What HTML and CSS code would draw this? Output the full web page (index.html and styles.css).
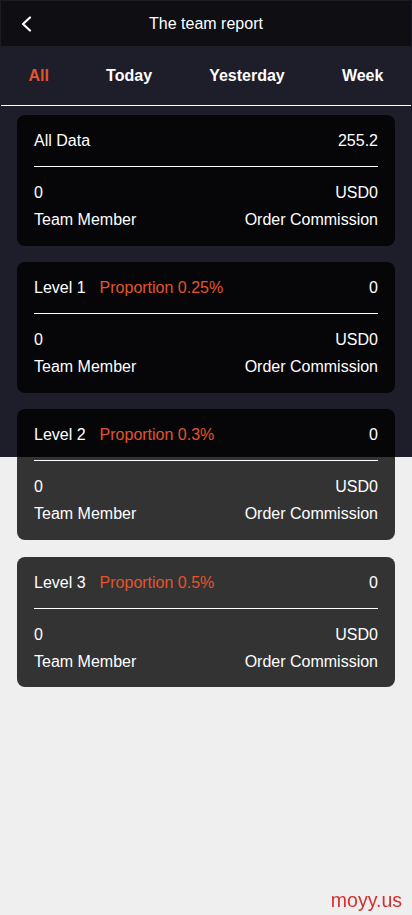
FILE: index.html
```html
<!DOCTYPE html>
<html lang="en">
<head>
<meta charset="utf-8">
<meta name="viewport" content="width=device-width, initial-scale=1">
<title>The team report</title>
<link rel="stylesheet" href="styles.css">
</head>
<body>
<div class="page">
  <header class="topbar">
    <span class="back">
      <svg width="16" height="16" viewBox="0 0 16 16"><path d="M12 1.5 L5 8 L12 14.5" fill="none" stroke="#fff" stroke-width="2.2" stroke-linecap="round" stroke-linejoin="round"/></svg>
    </span>
    <h1 class="title">The team report</h1>
  </header>
  <nav class="tabs">
    <span class="tab active">All</span>
    <span class="tab">Today</span>
    <span class="tab">Yesterday</span>
    <span class="tab">Week</span>
  </nav>
  <div class="tab-line"></div>
  <main class="list">
    <section class="card">
      <div class="row head"><span>All Data</span><span>255.2</span></div>
      <div class="row"><span>0</span><span>USD0</span></div>
      <div class="row sub"><span>Team Member</span><span>Order Commission</span></div>
    </section>
    <section class="card">
      <div class="row head"><span>Level 1<em class="prop">Proportion 0.25%</em></span><span>0</span></div>
      <div class="row"><span>0</span><span>USD0</span></div>
      <div class="row sub"><span>Team Member</span><span>Order Commission</span></div>
    </section>
    <section class="card">
      <div class="row head"><span>Level 2<em class="prop">Proportion 0.3%</em></span><span>0</span></div>
      <div class="row"><span>0</span><span>USD0</span></div>
      <div class="row sub"><span>Team Member</span><span>Order Commission</span></div>
    </section>
    <section class="card">
      <div class="row head"><span>Level 3<em class="prop">Proportion 0.5%</em></span><span>0</span></div>
      <div class="row"><span>0</span><span>USD0</span></div>
      <div class="row sub"><span>Team Member</span><span>Order Commission</span></div>
    </section>
  </main>
</div>
<div class="watermark">moyy.us</div>
</body>
</html>
```
FILE: styles.css
```css
* { box-sizing: border-box; }
html, body { margin: 0; padding: 0; }
body {
  font-family: "Liberation Sans", Arial, sans-serif;
  color: #fff;
  min-height: 915px;
  background: linear-gradient(to bottom, #1e1d2a 0, #1e1d2a 457px, #efefef 457px);
}
.page { width: 412px; }
.topbar {
  height: 46px;
  background: #0e0e13;
  display: flex;
  align-items: center;
  justify-content: center;
  position: relative;
  border: 1px solid #1b1b24;
  border-bottom: none;
}
.back {
  position: absolute;
  left: 17px;
  top: 15px;
  width: 16px;
  height: 16px;
  display: flex;
}
.title {
  margin: 0;
  font-size: 16px;
  font-weight: normal;
  line-height: 20px;
}
.tabs {
  height: 59px;
  display: flex;
  justify-content: space-around;
  align-items: center;
}
.tab {
  font-size: 16px;
  font-weight: bold;
  color: #fff;
  line-height: 20px;
}
.tab.active { color: #e4542a; }
.tab-line {
  height: 1px;
  margin: 0 1px;
  background: #fff;
}
.list {
  padding: 9px 17px 0;
  display: flex;
  flex-direction: column;
  gap: 16.6px;
}
.card {
  background: rgba(0, 0, 0, 0.79);
  border-radius: 8px;
  padding: 16px 17px 15.6px;
}
.row {
  display: flex;
  justify-content: space-between;
  align-items: center;
  font-size: 16px;
  line-height: 20px;
}
.row.head {
  padding-bottom: 15px;
  border-bottom: 1px solid #fff;
  margin-bottom: 16px;
}
.row.sub { margin-top: 7px; }
.prop {
  font-style: normal;
  color: #e2552c;
  margin-left: 14px;
}
.watermark {
  position: fixed;
  right: 10px;
  bottom: 4px;
  font-size: 19.5px;
  line-height: 22px;
  color: #d3302e;
}
```
